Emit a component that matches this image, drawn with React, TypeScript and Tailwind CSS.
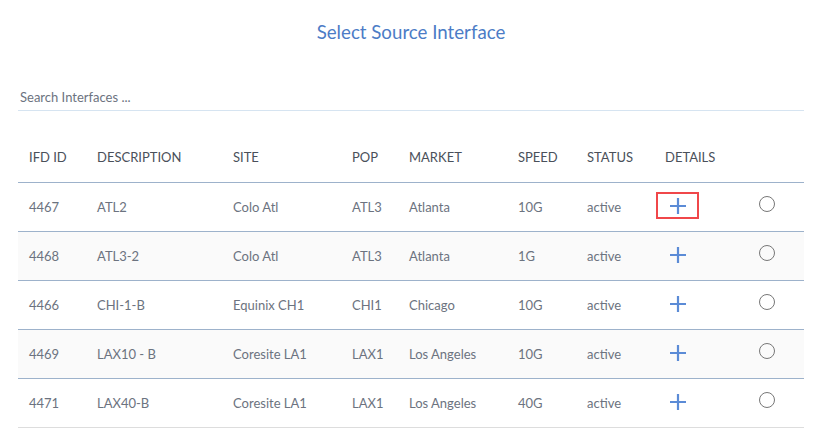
type Row = {
  id: string
  description: string
  site: string
  pop: string
  market: string
  speed: string
  status: string
}

const rows: Row[] = [
  { id: '4467', description: 'ATL2', site: 'Colo Atl', pop: 'ATL3', market: 'Atlanta', speed: '10G', status: 'active' },
  { id: '4468', description: 'ATL3-2', site: 'Colo Atl', pop: 'ATL3', market: 'Atlanta', speed: '1G', status: 'active' },
  { id: '4466', description: 'CHI-1-B', site: 'Equinix CH1', pop: 'CHI1', market: 'Chicago', speed: '10G', status: 'active' },
  { id: '4469', description: 'LAX10 - B', site: 'Coresite LA1', pop: 'LAX1', market: 'Los Angeles', speed: '10G', status: 'active' },
  { id: '4471', description: 'LAX40-B', site: 'Coresite LA1', pop: 'LAX1', market: 'Los Angeles', speed: '40G', status: 'active' },
]

const cols = 'grid grid-cols-[68px_136px_119px_57px_109px_69px_78px_94px_1fr] items-center'

function PlusIcon() {
  return (
    <svg width="18" height="18" viewBox="0 0 18 18" className="text-[#5b8bd6]">
      <path d="M9 1v16M1 9h16" stroke="currentColor" strokeWidth="2.2" fill="none" />
    </svg>
  )
}

export default function App() {
  return (
    <div className="min-h-[437px] bg-white pl-[18px] pr-[13px] pt-[20px] font-['Lato','Liberation_Sans',sans-serif] text-[13px] text-[#6c7380]">
      <h1 className="text-center text-[18.7px] leading-[24px] text-[#4c7cc6]">Select Source Interface</h1>

      {/* search */}
      <div className="mt-[44px] border-b border-[#d6e4f1] pb-[2px] pl-[2px]">
        <input
          className="w-full bg-transparent text-[13px] leading-[18px] outline-none placeholder:text-[#6c7380]"
          placeholder="Search Interfaces ..."
        />
      </div>

      {/* table */}
      <div className="mt-[23px]">
        <div className={`${cols} h-[49px] border-b border-[#9db2cb] text-[#4a505a]`}>
          {['IFD ID', 'DESCRIPTION', 'SITE', 'POP', 'MARKET', 'SPEED', 'STATUS', 'DETAILS', ''].map((h, i) => (
            <div key={i} className="pl-[11px] pt-[1px]">{h}</div>
          ))}
        </div>

        {rows.map((r, i) => (
          <div
            key={r.id}
            className={`${cols} h-[49px] border-b ${i === rows.length - 1 ? 'border-[#dddddd]' : 'border-[#9db2cb]'} ${i % 2 === 1 ? 'bg-[#fafafa]' : 'bg-white'}`}
          >
            <div className="pl-[11px] pt-[3px]">{r.id}</div>
            <div className="pl-[11px] pt-[3px]">{r.description}</div>
            <div className="pl-[11px] pt-[3px]">{r.site}</div>
            <div className="pl-[11px] pt-[3px]">{r.pop}</div>
            <div className="pl-[11px] pt-[3px]">{r.market}</div>
            <div className="pl-[11px] pt-[3px]">{r.speed}</div>
            <div className="pl-[11px] pt-[3px]">{r.status}</div>
            <div className="pl-[2px] pb-[2px]">
              <button
                className={`flex h-[27px] w-[43px] items-center justify-center border-2 ${i === 0 ? 'border-[#f0474a]' : 'border-transparent'}`}
              >
                <PlusIcon />
              </button>
            </div>
            <div className="pl-[11px] pb-[6px]">
              <span className="block h-[16px] w-[16px] rounded-full border border-[#777]" />
            </div>
          </div>
        ))}
      </div>
    </div>
  )
}
